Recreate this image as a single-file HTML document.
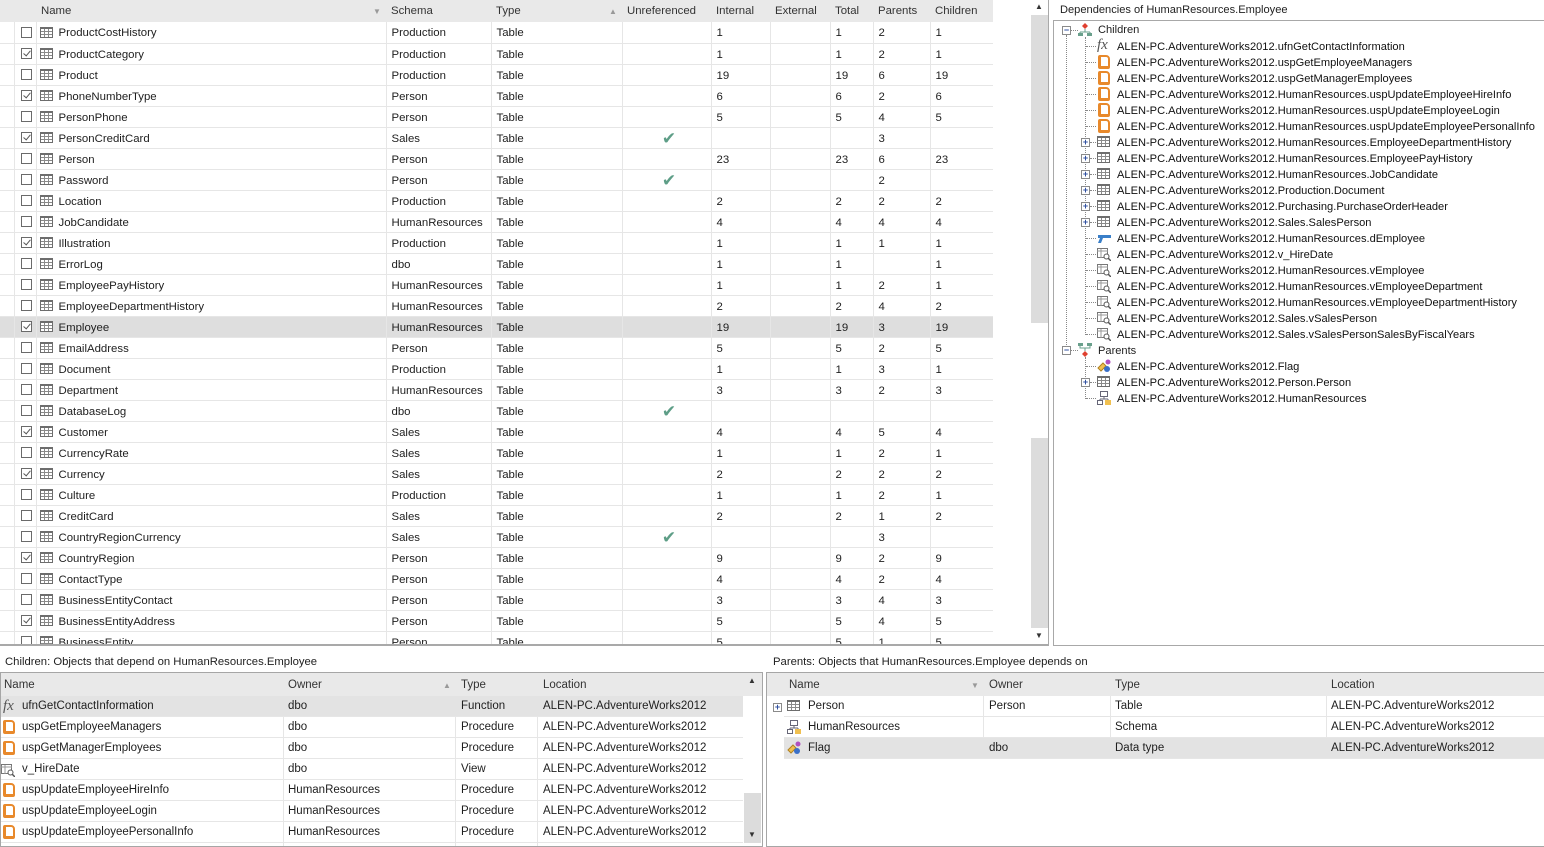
<!DOCTYPE html>
<html><head><meta charset="utf-8"><style>
*{box-sizing:border-box;margin:0;padding:0}
body{width:1544px;height:847px;background:#fff;font-family:"Liberation Sans",sans-serif;font-size:11.4px;color:#1e1e1e;position:relative;overflow:hidden}
.abs{position:absolute}
.hdr{position:absolute;left:0;top:0;width:993px;height:22px;background:#e9e9e9}
.hdr span{position:absolute;top:5px;color:#333}
table{border-collapse:collapse;table-layout:fixed}
#g{position:absolute;left:0;top:22px;width:993px}
#g td{height:21px;border-right:1px solid #e6e6e6;border-bottom:1px solid #e6e6e6;padding:2px 0 0 5px;white-space:nowrap;overflow:hidden;vertical-align:middle}
#g td:first-child{border-right:1px solid #e6e6e6;padding:0}
#g td.cb{padding:0 0 0 6px}
#g td.nm{padding:2px 0 0 3px}
#g tr.sel td{background:#dedede}
.ck{display:inline-block;width:11px;height:11px;border:1px solid #6a6a6a;background:#fff;vertical-align:middle;position:relative}
.ck.on:after{content:"";position:absolute;left:3px;top:0px;width:3px;height:6px;border:solid #555;border-width:0 1.5px 1.5px 0;transform:rotate(40deg)}
.ti{display:inline-block;width:13px;height:11px;border:1px solid #6d6d6d;border-top-width:2px;vertical-align:middle;margin-right:6px;margin-top:-2px;background:
linear-gradient(90deg,transparent 3px,#8a8a8a 3px,#8a8a8a 4px,transparent 4px,transparent 7px,#8a8a8a 7px,#8a8a8a 8px,transparent 8px),
linear-gradient(180deg,transparent 2px,#8a8a8a 2px,#8a8a8a 3px,transparent 3px,transparent 5px,#8a8a8a 5px,#8a8a8a 6px,transparent 6px);background-color:#fff}
.gc{color:#5e9e87;font-size:17px;display:block;text-align:center;line-height:16px}
.sb{position:absolute;background:#dcdcdc}
.tree{position:absolute;left:1053px;top:20px;width:491px;height:626px;border:1px solid #a8a8a8;border-right:none}
.ti2{position:absolute;left:1117px;white-space:nowrap;color:#111;font-size:11.1px}
.vl{position:absolute;border-left:1px dotted #888;width:0}
.hl{position:absolute;border-top:1px dotted #888;height:0}
.ex{position:absolute;width:9px;height:9px;border:1px solid #8a8a8a;background:#fff;font-size:9px;line-height:7px;text-align:center;color:#3050a0;font-weight:bold}
.ic{position:absolute;width:14px;height:14px}
.proc{position:absolute;width:12px;height:14px;border:2px solid #e8892b;border-radius:2px 4px 2px 2px;border-bottom-width:3px;border-left-width:3px}
.fx{position:absolute;font-family:"Liberation Serif",serif;font-style:italic;font-size:15px;color:#555;line-height:14px}
.bt{position:absolute;border:1px solid #a6a6a6;background:#fff;font-size:11.5px}
.bh{position:absolute;left:0;top:0;right:0;height:23px;background:#e9e9e9}
.bh span{position:absolute;top:6px;color:#333}
.br{position:absolute;left:0;height:21px;border-bottom:1px solid #e6e6e6;white-space:nowrap}
.br span{position:absolute;top:4px}
.vd{position:absolute;top:23px;width:1px;background:#e6e6e6}
.lbl{font-size:11.3px}
</style></head><body>

<div class="hdr">
<span style="left:41px">Name</span><span style="left:373px;top:7px;color:#999;font-size:8px">▼</span>
<span style="left:391px">Schema</span><span style="left:496px">Type</span>
<span style="left:609px;top:7px;color:#999;font-size:8px">▲</span>
<span style="left:627px">Unreferenced</span><span style="left:716px">Internal</span><span style="left:775px">External</span><span style="left:835px">Total</span><span style="left:878px">Parents</span><span style="left:935px">Children</span>
</div>
<div style="position:absolute;left:0;top:22px;width:993px;height:622px;overflow:hidden">
<table id="g" style="top:0">
<colgroup><col style="width:14px"><col style="width:22px"><col style="width:350px"><col style="width:105px"><col style="width:131px"><col style="width:89px"><col style="width:59px"><col style="width:60px"><col style="width:43px"><col style="width:57px"><col style="width:63px"></colgroup>
<tr><td></td><td class="cb"><span class="ck"></span></td><td class="nm"><span class="ti"></span>ProductCostHistory</td><td>Production</td><td>Table</td><td></td><td>1</td><td></td><td>1</td><td>2</td><td>1</td></tr>
<tr><td></td><td class="cb"><span class="ck on"></span></td><td class="nm"><span class="ti"></span>ProductCategory</td><td>Production</td><td>Table</td><td></td><td>1</td><td></td><td>1</td><td>2</td><td>1</td></tr>
<tr><td></td><td class="cb"><span class="ck"></span></td><td class="nm"><span class="ti"></span>Product</td><td>Production</td><td>Table</td><td></td><td>19</td><td></td><td>19</td><td>6</td><td>19</td></tr>
<tr><td></td><td class="cb"><span class="ck on"></span></td><td class="nm"><span class="ti"></span>PhoneNumberType</td><td>Person</td><td>Table</td><td></td><td>6</td><td></td><td>6</td><td>2</td><td>6</td></tr>
<tr><td></td><td class="cb"><span class="ck"></span></td><td class="nm"><span class="ti"></span>PersonPhone</td><td>Person</td><td>Table</td><td></td><td>5</td><td></td><td>5</td><td>4</td><td>5</td></tr>
<tr><td></td><td class="cb"><span class="ck on"></span></td><td class="nm"><span class="ti"></span>PersonCreditCard</td><td>Sales</td><td>Table</td><td><span class="gc">✔</span></td><td></td><td></td><td></td><td>3</td><td></td></tr>
<tr><td></td><td class="cb"><span class="ck"></span></td><td class="nm"><span class="ti"></span>Person</td><td>Person</td><td>Table</td><td></td><td>23</td><td></td><td>23</td><td>6</td><td>23</td></tr>
<tr><td></td><td class="cb"><span class="ck"></span></td><td class="nm"><span class="ti"></span>Password</td><td>Person</td><td>Table</td><td><span class="gc">✔</span></td><td></td><td></td><td></td><td>2</td><td></td></tr>
<tr><td></td><td class="cb"><span class="ck"></span></td><td class="nm"><span class="ti"></span>Location</td><td>Production</td><td>Table</td><td></td><td>2</td><td></td><td>2</td><td>2</td><td>2</td></tr>
<tr><td></td><td class="cb"><span class="ck"></span></td><td class="nm"><span class="ti"></span>JobCandidate</td><td>HumanResources</td><td>Table</td><td></td><td>4</td><td></td><td>4</td><td>4</td><td>4</td></tr>
<tr><td></td><td class="cb"><span class="ck on"></span></td><td class="nm"><span class="ti"></span>Illustration</td><td>Production</td><td>Table</td><td></td><td>1</td><td></td><td>1</td><td>1</td><td>1</td></tr>
<tr><td></td><td class="cb"><span class="ck"></span></td><td class="nm"><span class="ti"></span>ErrorLog</td><td>dbo</td><td>Table</td><td></td><td>1</td><td></td><td>1</td><td></td><td>1</td></tr>
<tr><td></td><td class="cb"><span class="ck"></span></td><td class="nm"><span class="ti"></span>EmployeePayHistory</td><td>HumanResources</td><td>Table</td><td></td><td>1</td><td></td><td>1</td><td>2</td><td>1</td></tr>
<tr><td></td><td class="cb"><span class="ck"></span></td><td class="nm"><span class="ti"></span>EmployeeDepartmentHistory</td><td>HumanResources</td><td>Table</td><td></td><td>2</td><td></td><td>2</td><td>4</td><td>2</td></tr>
<tr class="sel"><td></td><td class="cb"><span class="ck on"></span></td><td class="nm"><span class="ti"></span>Employee</td><td>HumanResources</td><td>Table</td><td></td><td>19</td><td></td><td>19</td><td>3</td><td>19</td></tr>
<tr><td></td><td class="cb"><span class="ck"></span></td><td class="nm"><span class="ti"></span>EmailAddress</td><td>Person</td><td>Table</td><td></td><td>5</td><td></td><td>5</td><td>2</td><td>5</td></tr>
<tr><td></td><td class="cb"><span class="ck"></span></td><td class="nm"><span class="ti"></span>Document</td><td>Production</td><td>Table</td><td></td><td>1</td><td></td><td>1</td><td>3</td><td>1</td></tr>
<tr><td></td><td class="cb"><span class="ck"></span></td><td class="nm"><span class="ti"></span>Department</td><td>HumanResources</td><td>Table</td><td></td><td>3</td><td></td><td>3</td><td>2</td><td>3</td></tr>
<tr><td></td><td class="cb"><span class="ck"></span></td><td class="nm"><span class="ti"></span>DatabaseLog</td><td>dbo</td><td>Table</td><td><span class="gc">✔</span></td><td></td><td></td><td></td><td></td><td></td></tr>
<tr><td></td><td class="cb"><span class="ck on"></span></td><td class="nm"><span class="ti"></span>Customer</td><td>Sales</td><td>Table</td><td></td><td>4</td><td></td><td>4</td><td>5</td><td>4</td></tr>
<tr><td></td><td class="cb"><span class="ck"></span></td><td class="nm"><span class="ti"></span>CurrencyRate</td><td>Sales</td><td>Table</td><td></td><td>1</td><td></td><td>1</td><td>2</td><td>1</td></tr>
<tr><td></td><td class="cb"><span class="ck on"></span></td><td class="nm"><span class="ti"></span>Currency</td><td>Sales</td><td>Table</td><td></td><td>2</td><td></td><td>2</td><td>2</td><td>2</td></tr>
<tr><td></td><td class="cb"><span class="ck"></span></td><td class="nm"><span class="ti"></span>Culture</td><td>Production</td><td>Table</td><td></td><td>1</td><td></td><td>1</td><td>2</td><td>1</td></tr>
<tr><td></td><td class="cb"><span class="ck"></span></td><td class="nm"><span class="ti"></span>CreditCard</td><td>Sales</td><td>Table</td><td></td><td>2</td><td></td><td>2</td><td>1</td><td>2</td></tr>
<tr><td></td><td class="cb"><span class="ck"></span></td><td class="nm"><span class="ti"></span>CountryRegionCurrency</td><td>Sales</td><td>Table</td><td><span class="gc">✔</span></td><td></td><td></td><td></td><td>3</td><td></td></tr>
<tr><td></td><td class="cb"><span class="ck on"></span></td><td class="nm"><span class="ti"></span>CountryRegion</td><td>Person</td><td>Table</td><td></td><td>9</td><td></td><td>9</td><td>2</td><td>9</td></tr>
<tr><td></td><td class="cb"><span class="ck"></span></td><td class="nm"><span class="ti"></span>ContactType</td><td>Person</td><td>Table</td><td></td><td>4</td><td></td><td>4</td><td>2</td><td>4</td></tr>
<tr><td></td><td class="cb"><span class="ck"></span></td><td class="nm"><span class="ti"></span>BusinessEntityContact</td><td>Person</td><td>Table</td><td></td><td>3</td><td></td><td>3</td><td>4</td><td>3</td></tr>
<tr><td></td><td class="cb"><span class="ck on"></span></td><td class="nm"><span class="ti"></span>BusinessEntityAddress</td><td>Person</td><td>Table</td><td></td><td>5</td><td></td><td>5</td><td>4</td><td>5</td></tr>
<tr><td></td><td class="cb"><span class="ck"></span></td><td class="nm"><span class="ti"></span>BusinessEntity</td><td>Person</td><td>Table</td><td></td><td>5</td><td></td><td>5</td><td>1</td><td>5</td></tr>
</table>
</div>
<div class="abs" style="left:0;top:644px;width:1049px;height:2px;background:#a9a9a9"></div>
<div class="abs" style="left:1048px;top:0;width:1px;height:646px;background:#a9a9a9"></div>
<div class="sb" style="left:1031px;top:15px;width:17px;height:308px"></div>
<div class="sb" style="left:1031px;top:438px;width:17px;height:190px"></div>
<div class="abs" style="left:1035px;top:2px;font-size:8px;color:#333">▲</div>
<div class="abs" style="left:1035px;top:631px;font-size:8px;color:#333">▼</div>

<div class="abs" style="left:1060px;top:4px;color:#222;font-size:11.1px">Dependencies of HumanResources.Employee</div>
<div class="tree"></div>
<div class="vl" style="left:1066px;top:35px;height:316px"></div>
<div class="vl" style="left:1085px;top:37px;height:298px"></div>
<div class="vl" style="left:1085px;top:357px;height:42px"></div>
<div class="hl" style="left:1070px;top:30px;width:8px"></div>
<div class="hl" style="left:1070px;top:350px;width:8px"></div>
<div class="ex" style="left:1062px;top:26px">−</div>
<div class="ex" style="left:1062px;top:346px">−</div>
<svg class="ic" style="left:1078px;top:23px" viewBox="0 0 14 14"><path d="M7 0l3 3-3 3-3-3z" fill="#e04030"/><path d="M7 6v3M2 9h10M2 9v2M12 9v2" stroke="#6aa08c" fill="none"/><rect x="0" y="10" width="5" height="3" fill="#6aa08c"/><rect x="9" y="10" width="5" height="3" fill="#6aa08c"/></svg>
<div class="abs" style="left:1098px;top:24px;font-size:11.1px">Children</div>
<svg class="ic" style="left:1078px;top:343px" viewBox="0 0 14 14"><rect x="0" y="0" width="5" height="3" fill="#6aa08c"/><rect x="9" y="0" width="5" height="3" fill="#6aa08c"/><path d="M2 3v2h10V3M7 5v3" stroke="#6aa08c" fill="none"/><path d="M7 8l3 3-3 3-3-3z" fill="#e04030"/></svg>
<div class="abs" style="left:1098px;top:345px;font-size:11.1px">Parents</div>

<div class="hl" style="left:1086px;top:46px;width:10px"></div><div class="fx" style="left:1097px;top:38px">fx</div><div class="ti2" style="top:41px">ALEN-PC.AdventureWorks2012.ufnGetContactInformation</div>
<div class="hl" style="left:1086px;top:62px;width:10px"></div><div class="proc" style="left:1098px;top:55px"></div><div class="ti2" style="top:57px">ALEN-PC.AdventureWorks2012.uspGetEmployeeManagers</div>
<div class="hl" style="left:1086px;top:78px;width:10px"></div><div class="proc" style="left:1098px;top:71px"></div><div class="ti2" style="top:73px">ALEN-PC.AdventureWorks2012.uspGetManagerEmployees</div>
<div class="hl" style="left:1086px;top:94px;width:10px"></div><div class="proc" style="left:1098px;top:87px"></div><div class="ti2" style="top:89px">ALEN-PC.AdventureWorks2012.HumanResources.uspUpdateEmployeeHireInfo</div>
<div class="hl" style="left:1086px;top:110px;width:10px"></div><div class="proc" style="left:1098px;top:103px"></div><div class="ti2" style="top:105px">ALEN-PC.AdventureWorks2012.HumanResources.uspUpdateEmployeeLogin</div>
<div class="hl" style="left:1086px;top:126px;width:10px"></div><div class="proc" style="left:1098px;top:119px"></div><div class="ti2" style="top:121px">ALEN-PC.AdventureWorks2012.HumanResources.uspUpdateEmployeePersonalInfo</div>
<div class="hl" style="left:1090px;top:142px;width:6px"></div><div class="ex" style="left:1081px;top:138px">+</div><span class="ti abs" style="left:1097px;top:138px"></span><div class="ti2" style="top:137px">ALEN-PC.AdventureWorks2012.HumanResources.EmployeeDepartmentHistory</div>
<div class="hl" style="left:1090px;top:158px;width:6px"></div><div class="ex" style="left:1081px;top:154px">+</div><span class="ti abs" style="left:1097px;top:154px"></span><div class="ti2" style="top:153px">ALEN-PC.AdventureWorks2012.HumanResources.EmployeePayHistory</div>
<div class="hl" style="left:1090px;top:174px;width:6px"></div><div class="ex" style="left:1081px;top:170px">+</div><span class="ti abs" style="left:1097px;top:170px"></span><div class="ti2" style="top:169px">ALEN-PC.AdventureWorks2012.HumanResources.JobCandidate</div>
<div class="hl" style="left:1090px;top:190px;width:6px"></div><div class="ex" style="left:1081px;top:186px">+</div><span class="ti abs" style="left:1097px;top:186px"></span><div class="ti2" style="top:185px">ALEN-PC.AdventureWorks2012.Production.Document</div>
<div class="hl" style="left:1090px;top:206px;width:6px"></div><div class="ex" style="left:1081px;top:202px">+</div><span class="ti abs" style="left:1097px;top:202px"></span><div class="ti2" style="top:201px">ALEN-PC.AdventureWorks2012.Purchasing.PurchaseOrderHeader</div>
<div class="hl" style="left:1090px;top:222px;width:6px"></div><div class="ex" style="left:1081px;top:218px">+</div><span class="ti abs" style="left:1097px;top:218px"></span><div class="ti2" style="top:217px">ALEN-PC.AdventureWorks2012.Sales.SalesPerson</div>
<div class="hl" style="left:1086px;top:238px;width:10px"></div><svg class="ic" style="left:1097px;top:231px" viewBox="0 0 14 14"><path d="M1 4h13v3H6l-2 5H1l2-5H1z" fill="#3a7fc8"/></svg><div class="ti2" style="top:233px">ALEN-PC.AdventureWorks2012.HumanResources.dEmployee</div>
<div class="hl" style="left:1086px;top:254px;width:10px"></div><svg class="ic" style="left:1097px;top:247px" viewBox="0 0 14 14"><rect x="0.5" y="1.5" width="10" height="9" fill="#fff" stroke="#777"/><path d="M0 4h11M4 2v9" stroke="#999"/><circle cx="9.5" cy="9.5" r="2.5" fill="#fff" stroke="#555"/><path d="M11 11l3 3" stroke="#555" stroke-width="1.5"/></svg><div class="ti2" style="top:249px">ALEN-PC.AdventureWorks2012.v_HireDate</div>
<div class="hl" style="left:1086px;top:270px;width:10px"></div><svg class="ic" style="left:1097px;top:263px" viewBox="0 0 14 14"><rect x="0.5" y="1.5" width="10" height="9" fill="#fff" stroke="#777"/><path d="M0 4h11M4 2v9" stroke="#999"/><circle cx="9.5" cy="9.5" r="2.5" fill="#fff" stroke="#555"/><path d="M11 11l3 3" stroke="#555" stroke-width="1.5"/></svg><div class="ti2" style="top:265px">ALEN-PC.AdventureWorks2012.HumanResources.vEmployee</div>
<div class="hl" style="left:1086px;top:286px;width:10px"></div><svg class="ic" style="left:1097px;top:279px" viewBox="0 0 14 14"><rect x="0.5" y="1.5" width="10" height="9" fill="#fff" stroke="#777"/><path d="M0 4h11M4 2v9" stroke="#999"/><circle cx="9.5" cy="9.5" r="2.5" fill="#fff" stroke="#555"/><path d="M11 11l3 3" stroke="#555" stroke-width="1.5"/></svg><div class="ti2" style="top:281px">ALEN-PC.AdventureWorks2012.HumanResources.vEmployeeDepartment</div>
<div class="hl" style="left:1086px;top:302px;width:10px"></div><svg class="ic" style="left:1097px;top:295px" viewBox="0 0 14 14"><rect x="0.5" y="1.5" width="10" height="9" fill="#fff" stroke="#777"/><path d="M0 4h11M4 2v9" stroke="#999"/><circle cx="9.5" cy="9.5" r="2.5" fill="#fff" stroke="#555"/><path d="M11 11l3 3" stroke="#555" stroke-width="1.5"/></svg><div class="ti2" style="top:297px">ALEN-PC.AdventureWorks2012.HumanResources.vEmployeeDepartmentHistory</div>
<div class="hl" style="left:1086px;top:318px;width:10px"></div><svg class="ic" style="left:1097px;top:311px" viewBox="0 0 14 14"><rect x="0.5" y="1.5" width="10" height="9" fill="#fff" stroke="#777"/><path d="M0 4h11M4 2v9" stroke="#999"/><circle cx="9.5" cy="9.5" r="2.5" fill="#fff" stroke="#555"/><path d="M11 11l3 3" stroke="#555" stroke-width="1.5"/></svg><div class="ti2" style="top:313px">ALEN-PC.AdventureWorks2012.Sales.vSalesPerson</div>
<div class="hl" style="left:1086px;top:334px;width:10px"></div><svg class="ic" style="left:1097px;top:327px" viewBox="0 0 14 14"><rect x="0.5" y="1.5" width="10" height="9" fill="#fff" stroke="#777"/><path d="M0 4h11M4 2v9" stroke="#999"/><circle cx="9.5" cy="9.5" r="2.5" fill="#fff" stroke="#555"/><path d="M11 11l3 3" stroke="#555" stroke-width="1.5"/></svg><div class="ti2" style="top:329px">ALEN-PC.AdventureWorks2012.Sales.vSalesPersonSalesByFiscalYears</div>
<div class="hl" style="left:1086px;top:366px;width:10px"></div><svg class="ic" style="left:1097px;top:359px" viewBox="0 0 14 14"><path d="M1 9l5-5 3 3-5 5z" fill="#f0c050" stroke="#b08020"/><circle cx="11" cy="3" r="2.5" fill="#b050c0"/><circle cx="10" cy="10" r="3" fill="#3a70c8"/></svg><div class="ti2" style="top:361px">ALEN-PC.AdventureWorks2012.Flag</div>
<div class="hl" style="left:1090px;top:382px;width:6px"></div><div class="ex" style="left:1081px;top:378px">+</div><span class="ti abs" style="left:1097px;top:378px"></span><div class="ti2" style="top:377px">ALEN-PC.AdventureWorks2012.Person.Person</div>
<div class="hl" style="left:1086px;top:398px;width:10px"></div><svg class="ic" style="left:1097px;top:391px" viewBox="0 0 14 14"><rect x="3.5" y="0.5" width="7" height="5" fill="#fff" stroke="#667"/><path d="M7 6v2M3 8h8M3 8v2M11 8v2" stroke="#667" fill="none"/><rect x="0.5" y="9.5" width="5" height="4" fill="#fff" stroke="#667"/><rect x="8" y="9" width="6" height="5" fill="#f0c050"/></svg><div class="ti2" style="top:393px">ALEN-PC.AdventureWorks2012.HumanResources</div>

<div class="abs lbl" style="left:5px;top:656px">Children: Objects that depend on HumanResources.Employee</div>
<div class="bt" style="left:0;top:672px;width:763px;height:175px">
 <div class="bh"><span style="left:3px">Name</span><span style="left:287px">Owner</span><span style="left:442px;top:8px;font-size:8px;color:#999">▲</span><span style="left:460px">Type</span><span style="left:542px">Location</span></div>
 <div class="vd" style="left:282px;height:150px"></div><div class="vd" style="left:454px;height:150px"></div><div class="vd" style="left:536px;height:150px"></div>
 <div class="br" style="top:23px;width:742px;background:#e3e3e3"><div class="fx" style="left:2px;top:3px">fx</div><span style="left:21px">ufnGetContactInformation</span><span style="left:287px">dbo</span><span style="left:460px">Function</span><span style="left:542px">ALEN-PC.AdventureWorks2012</span></div>
 <div class="br" style="top:44px;width:742px"><div class="proc" style="left:2px;top:3px"></div><span style="left:21px">uspGetEmployeeManagers</span><span style="left:287px">dbo</span><span style="left:460px">Procedure</span><span style="left:542px">ALEN-PC.AdventureWorks2012</span></div>
 <div class="br" style="top:65px;width:742px"><div class="proc" style="left:2px;top:3px"></div><span style="left:21px">uspGetManagerEmployees</span><span style="left:287px">dbo</span><span style="left:460px">Procedure</span><span style="left:542px">ALEN-PC.AdventureWorks2012</span></div>
 <div class="br" style="top:86px;width:742px"><svg class="ic" style="left:0;top:4px" viewBox="0 0 14 14"><rect x="0.5" y="1.5" width="10" height="9" fill="#fff" stroke="#777"/><path d="M0 4h11M4 2v9" stroke="#999"/><circle cx="9.5" cy="9.5" r="2.5" fill="#fff" stroke="#555"/><path d="M11 11l3 3" stroke="#555" stroke-width="1.5"/></svg><span style="left:21px">v_HireDate</span><span style="left:287px">dbo</span><span style="left:460px">View</span><span style="left:542px">ALEN-PC.AdventureWorks2012</span></div>
 <div class="br" style="top:107px;width:742px"><div class="proc" style="left:2px;top:3px"></div><span style="left:21px">uspUpdateEmployeeHireInfo</span><span style="left:287px">HumanResources</span><span style="left:460px">Procedure</span><span style="left:542px">ALEN-PC.AdventureWorks2012</span></div>
 <div class="br" style="top:128px;width:742px"><div class="proc" style="left:2px;top:3px"></div><span style="left:21px">uspUpdateEmployeeLogin</span><span style="left:287px">HumanResources</span><span style="left:460px">Procedure</span><span style="left:542px">ALEN-PC.AdventureWorks2012</span></div>
 <div class="br" style="top:149px;width:742px"><div class="proc" style="left:2px;top:3px"></div><span style="left:21px">uspUpdateEmployeePersonalInfo</span><span style="left:287px">HumanResources</span><span style="left:460px">Procedure</span><span style="left:542px">ALEN-PC.AdventureWorks2012</span></div>
 <div class="sb" style="left:743px;top:120px;width:17px;height:50px"></div>
 <div class="abs" style="left:747px;top:3px;font-size:8px;color:#333">▲</div>
 <div class="abs" style="left:747px;top:157px;font-size:8px;color:#333">▼</div>
</div>

<div class="abs lbl" style="left:773px;top:656px">Parents: Objects that HumanResources.Employee depends on</div>
<div class="bt" style="left:766px;top:672px;width:778px;height:175px;border-right:none">
 <div class="bh"><span style="left:22px">Name</span><span style="left:204px;top:8px;font-size:8px;color:#999">▼</span><span style="left:222px">Owner</span><span style="left:348px">Type</span><span style="left:564px">Location</span></div>
 <div class="vd" style="left:216px;height:63px"></div><div class="vd" style="left:343px;height:63px"></div><div class="vd" style="left:559px;height:63px"></div>
 <div class="br" style="top:23px;left:17px;width:760px"><span class="ti abs" style="left:3px;top:6px"></span><span style="left:24px">Person</span><span style="left:205px">Person</span><span style="left:331px">Table</span><span style="left:547px">ALEN-PC.AdventureWorks2012</span></div>
 <div class="ex" style="left:6px;top:30px">+</div>
 <div class="br" style="top:44px;left:17px;width:760px"><svg class="ic" style="left:3px;top:3px" viewBox="0 0 14 14"><rect x="3.5" y="0.5" width="7" height="5" fill="#fff" stroke="#667"/><path d="M7 6v2M3 8h8M3 8v2M11 8v2" stroke="#667" fill="none"/><rect x="0.5" y="9.5" width="5" height="4" fill="#fff" stroke="#667"/><rect x="8" y="9" width="6" height="5" fill="#f0c050"/></svg><span style="left:24px">HumanResources</span><span style="left:331px">Schema</span><span style="left:547px">ALEN-PC.AdventureWorks2012</span></div>
 <div class="br" style="top:65px;left:17px;width:760px;background:#e3e3e3"><svg class="ic" style="left:3px;top:3px" viewBox="0 0 14 14"><path d="M1 9l5-5 3 3-5 5z" fill="#f0c050" stroke="#b08020"/><circle cx="11" cy="3" r="2.5" fill="#b050c0"/><circle cx="10" cy="10" r="3" fill="#3a70c8"/></svg><span style="left:24px">Flag</span><span style="left:205px">dbo</span><span style="left:331px">Data type</span><span style="left:547px">ALEN-PC.AdventureWorks2012</span></div>
</div>
</body></html>
